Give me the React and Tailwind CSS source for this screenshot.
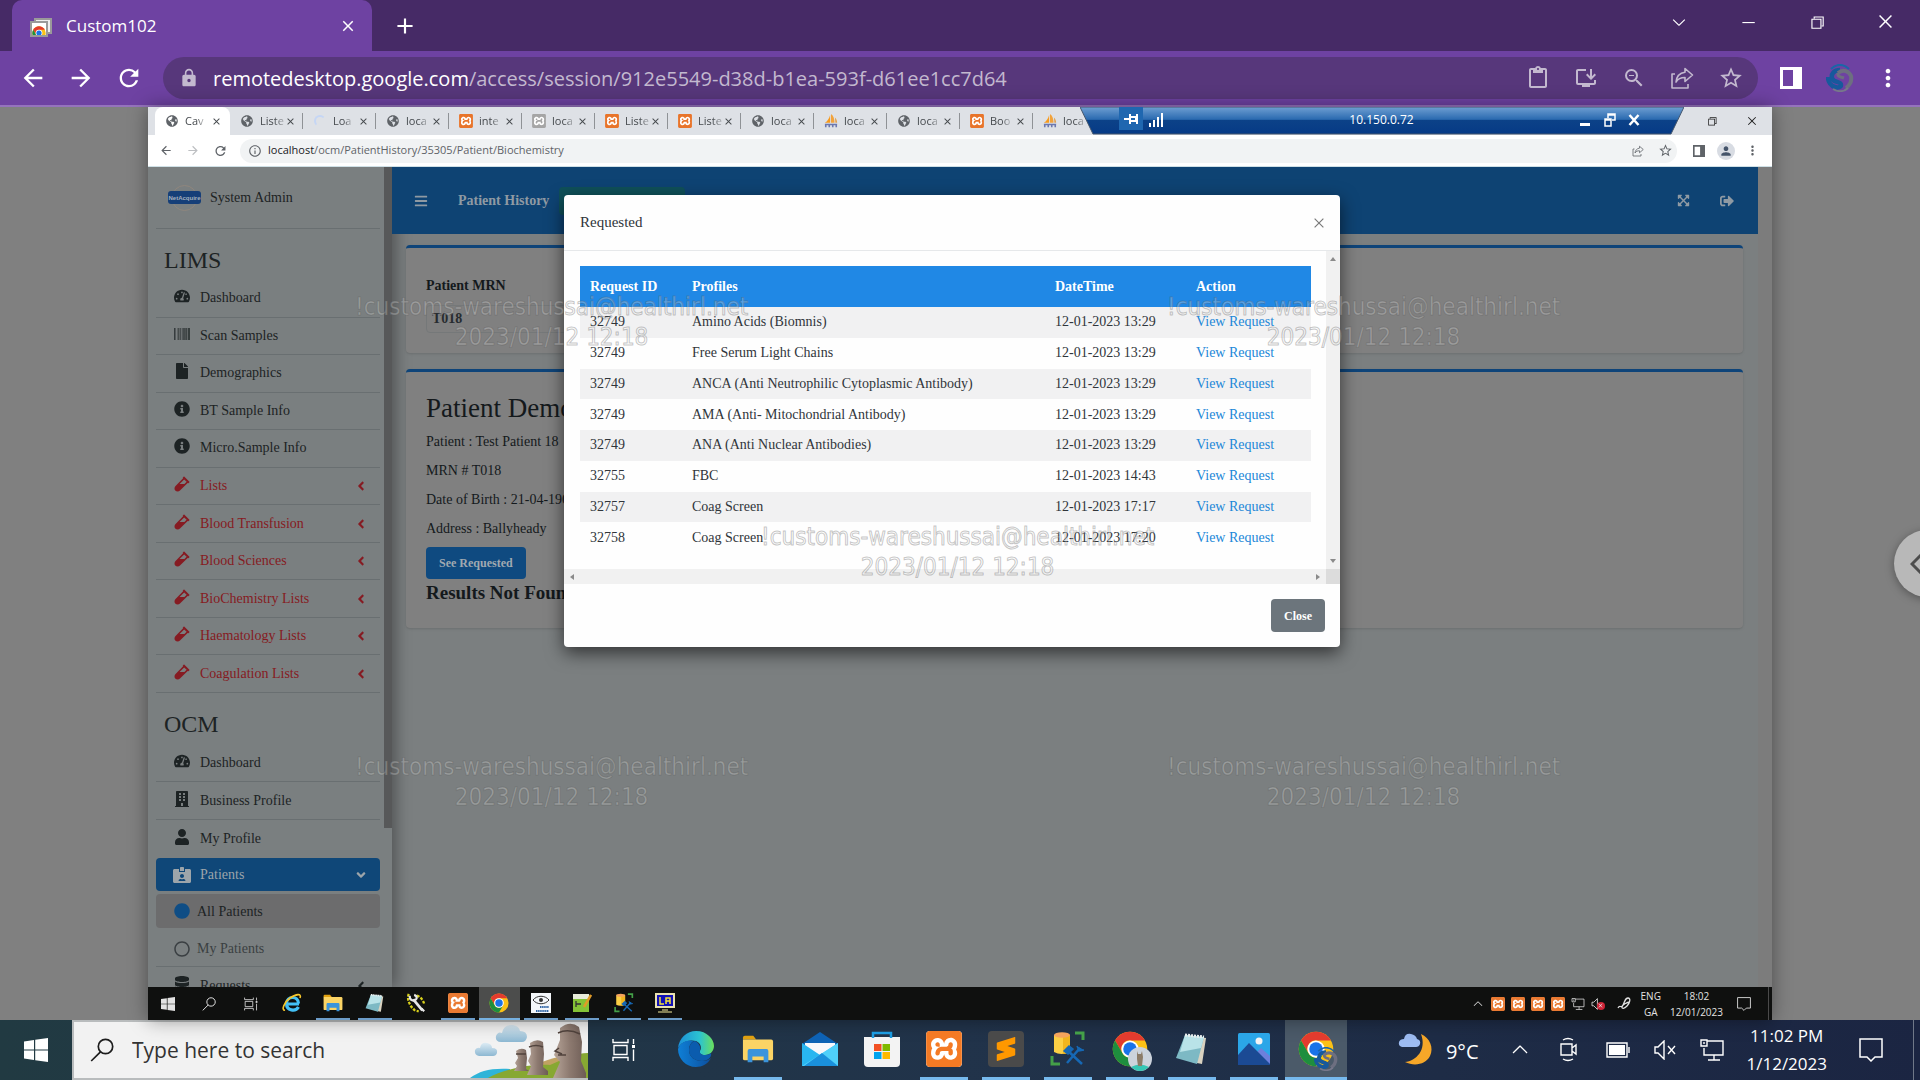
import React from "react";
import {
  FaTachometerAlt, FaBarcode, FaFile, FaInfoCircle, FaVial, FaAngleLeft, FaAngleDown, FaBuilding, FaUser,
  FaIdCardAlt, FaDatabase, FaExpandArrowsAlt, FaSignOutAlt, FaBars, FaGlobeAmericas, FaCircle, FaRegCircle,
} from "react-icons/fa";
import { SiXampp, SiSublimetext } from "react-icons/si";
import {
  MdContentPaste, MdZoomOut, MdStarBorder, MdArrowBack, MdArrowForward, MdRefresh, MdLock, MdAdd, MdClose,
  MdInfoOutline, MdMoreVert, MdPerson, MdOutlineInstallDesktop,
} from "react-icons/md";
import { VscChromeMinimize, VscChromeRestore, VscChromeClose, VscChevronDown, VscChevronUp } from "react-icons/vsc";

const ui = "font-['Open_Sans','Noto_Sans',sans-serif]";

/* ---------- drawings ---------- */
function ChromeLogo({ className }) {
  return (
    <svg viewBox="0 0 48 48" className={className} aria-hidden="true">
      <circle cx="24" cy="24" r="23" fill="#fbc116" />
      <path d="M4.1 12.5A23 23 0 0 1 43.9 12.5H24A11.5 11.5 0 0 0 14 29.8Z" fill="#e33b2e" />
      <path d="M4.1 12.5A23 23 0 0 0 24 47L34 29.8A11.5 11.5 0 0 1 14 29.8Z" fill="#1e8e3e" />
      <circle cx="24" cy="24" r="11.5" fill="#fff" />
      <circle cx="24" cy="24" r="9" fill="#1a73e8" />
    </svg>
  );
}
function WindowsLogo({ className }) {
  return (
    <svg viewBox="0 0 24 24" className={className} fill="currentColor" aria-hidden="true">
      <path d="M0 3.4 10 2v9.4H0zM11.2 1.8 24 0v11.4H11.2zM0 12.6h10V22L0 20.6zM11.2 12.6H24V24l-12.8-1.8z" />
    </svg>
  );
}
function SearchGlass({ className }) {
  return (
    <svg viewBox="0 0 24 24" className={className} fill="none" stroke="currentColor" strokeWidth="1.7" aria-hidden="true">
      <circle cx="15.5" cy="8.5" r="7.2" />
      <path d="M10.5 13.8 1.2 23" />
    </svg>
  );
}
function TaskView({ className }) {
  return (
    <svg viewBox="0 0 24 24" className={className} fill="none" stroke="currentColor" strokeWidth="1.4" aria-hidden="true">
      <path d="M1 1v3.5h15V1M1 23v-3.5h15V23M2 7.5h13v9H2zM21.500 1v5M21.500 11.500V23" />
      <path d="M20 7h3v3h-3z" fill="currentColor" stroke="none" />
    </svg>
  );
}
function ShareArrow({ className }) {
  return (
    <svg viewBox="0 0 24 24" className={className} fill="none" stroke="currentColor" strokeWidth="1.6" strokeLinejoin="round" aria-hidden="true">
      <path d="M5 8H2v14h16v-4" />
      <path d="M15 2.500 22.500 9 15 15.500v-4c-4 0-7 1-9 4.500.5-5 3.500-9 9-9.700z" />
    </svg>
  );
}
function SidePanel({ className }) {
  return (
    <svg viewBox="0 0 22 22" className={className} aria-hidden="true">
      <path d="M0 0h22v22H0zM3 3v16h10V3z" fill="currentColor" fillRule="evenodd" />
    </svg>
  );
}
function Swirl({ className }) {
  return (
    <svg viewBox="0 0 28 28" className={className} fill="none" aria-hidden="true">
      <path d="M14 6C8 6 5 10 6 14c1 5 9 3 9 7 0 2-3 3-6 2-4-1-7-5-7-10" stroke="#17599c" strokeWidth="4.500" />
      <path d="M12 9c5-4 11-2 13 3 1 5-1 9-5 12" stroke="#6d6f80" strokeWidth="4" />
      <path d="M12 9c-1 4 3 4 6 5" stroke="#6d6f80" strokeWidth="3" />
      <path d="M5 5C10-.5 18-.5 23 5" stroke="#1b66a8" strokeWidth="2" />
      <path d="M7 25c5 3 11 3 15-1" stroke="#77788a" strokeWidth="2" />
    </svg>
  );
}
function Xampp({ className }) {
  return (
    <span className="inline-flex rounded-sm bg-white">
      <SiXampp className={className} aria-hidden="true" />
    </span>
  );
}
function Pma({ className }) {
  return (
    <svg viewBox="0 0 16 16" className={className} aria-hidden="true">
      <path d="M7 1v9H1c3-2 5-5 6-9z" fill="#f79a1c" />
      <path d="M8 0c3 2 4 6 4 10H8z" fill="#f2a33c" />
      <path d="M12.500 4c2 2 2.500 4 2.500 6h-2z" fill="#e0a050" />
      <path d="M1 12h14M2 15V12M6 15v-3M10 15v-3M14 15v-3" stroke="#6c78af" strokeWidth="1.800" />
    </svg>
  );
}
function Folder({ className }) {
  return (
    <svg viewBox="0 0 34 28" className={className} aria-hidden="true">
      <path d="M1 2q0-2 2-2h9l3 4h-14z" fill="#e0a010" />
      <path d="M1 4h30q2 0 2 2v18q0 2-2 2H3q-2 0-2-2z" fill="#fbd465" />
      <path d="M6 16q0-2 2-2h18q2 0 2 2v12h-5v-6H11v6H6z" fill="#3b94dc" />
    </svg>
  );
}
function Notepad({ className }) {
  return (
    <svg viewBox="0 0 34 34" className={className} aria-hidden="true">
      <path d="M11 3 31 6l-4 26-10-2z" fill="#d9d2c0" />
      <path d="M10 3 29 5l-7 27L1 26z" fill="#7db9c4" />
      <path d="M10 3 29 5l-3 11L5 20z" fill="#b9e3e8" />
      <path d="M10 3l19 2" stroke="#e9eeee" strokeWidth="3" strokeDasharray="2 1" />
    </svg>
  );
}
function DbTools({ className }) {
  return (
    <svg viewBox="0 0 36 36" className={className} aria-hidden="true">
      <path d="M4 4v17q7 4 16 0V4z" fill="#fbcf45" />
      <path d="M13 3v20q4 0 7-2V4z" fill="#f0b51e" />
      <ellipse cx="12" cy="4" rx="8" ry="2.800" fill="#f5a45c" />
      <path d="M25 2h8v7M2 25v8h8" fill="none" stroke="#44a048" strokeWidth="3" />
      <path d="M17 19 32 33M30 17 17 32" stroke="#1668b4" strokeWidth="2.500" />
      <path d="m14 20 5-5 4 3-5 5zM27 15l2 5 5-1" fill="#1668b4" stroke="#1668b4" strokeWidth="1.500" />
    </svg>
  );
}
function Edge({ className }) {
  return (
    <svg viewBox="0 0 36 36" className={className} aria-hidden="true">
      <defs>
        <linearGradient id="edgeTop" x1="0" x2="1"><stop stopColor="#1b8fd8" /><stop offset=".6" stopColor="#2cc3d0" /><stop offset="1" stopColor="#6bdf5c" /></linearGradient>
        <linearGradient id="edgeLow" x1="0" x2="1"><stop stopColor="#0f7fd6" /><stop offset="1" stopColor="#0c4f9e" /></linearGradient>
      </defs>
      <path d="M0 17C1 7 9 0 18 0c11 0 18 8 18 15 0 5-4 9-9 9-4 0-6-2-5-4 2-3 1-8-4-10C11 8 3 11 0 17z" fill="url(#edgeTop)" />
      <path d="M0 18c2-7 10-10 16-8-4 2-5 6-5 9 0 7 6 11 13 11 4 0 7-1 9-3-3 6-9 9-15 9C8 36 0 28 0 18z" fill="url(#edgeLow)" />
      <path d="M11 19c0-4 2-8 6-9 4 2 6 6 5 9-1 4 2 5 5 5 3 0 5-1 6-2 1 4-3 8-9 8-7 0-13-4-13-11z" fill="#0b5cae" />
    </svg>
  );
}
function MailIcon({ className }) {
  return (
    <svg viewBox="0 0 36 34" className={className} aria-hidden="true">
      <path d="M0 12 18 0l18 12v5H0z" fill="#0d62b5" />
      <path d="M3 11h30v8L18 28 3 19z" fill="#f7f7fb" />
      <path d="M0 11l18 12L36 11v23H0z" fill="#29b6f0" />
      <path d="M36 11 0 34h36z" fill="#4fd0fa" />
      <path d="m20 21 16 13H2z" fill="#1a90dc" />
    </svg>
  );
}
function StoreIcon({ className }) {
  return (
    <svg viewBox="0 0 36 36" className={className} aria-hidden="true">
      <path d="M0 6h36v26q0 4-4 4H4q-4 0-4-4z" fill="#f3f3f3" />
      <path d="M9 7V2h18v5" fill="none" stroke="#1c9be0" strokeWidth="2.500" />
      <path d="M10 13h7.500v7H10z" fill="#f25022" /><path d="M18.500 13H26v7h-7.500z" fill="#7fba00" />
      <path d="M10 21h7.500v7H10z" fill="#00a4ef" /><path d="M18.500 21H26v7h-7.500z" fill="#ffb900" />
    </svg>
  );
}
function PhotosIcon({ className }) {
  return (
    <svg viewBox="0 0 32 32" className={className} aria-hidden="true">
      <rect width="32" height="32" rx="1.500" fill="#2ba6e8" />
      <circle cx="21" cy="8" r="3.500" fill="#f4f4f4" />
      <path d="m16 22 7-7 9 8v9H16z" fill="#6d80dc" />
      <path d="M0 22 11 10l21 21v1H0z" fill="#1b4a94" />
    </svg>
  );
}
function IeIcon({ className }) {
  return (
    <svg viewBox="0 0 20 20" className={className} fill="none" aria-hidden="true">
      <path d="M17 11H4.500M16.500 14c-3 5-12 4-12-3.500C4.500 3 16.500 2 16.500 10.500" stroke="#43c0f5" strokeWidth="3.200" />
      <path d="M3 17C-1 18 2 9 8 5S20 0 18 5" stroke="#f6c62c" strokeWidth="1.600" />
    </svg>
  );
}
function WrenchIcon({ className }) {
  return (
    <svg viewBox="0 0 22 22" className={className} fill="none" aria-hidden="true">
      <path d="M3 1c-2 5 0 12 6 17M12 3c4 1 7 5 8 9M5 14c3 5 6 6 9 6" stroke="#d8d01c" strokeWidth="2.500" strokeDasharray="3 1.500" />
      <path d="m8 7 10 12" stroke="#e8e8e8" strokeWidth="3" />
      <path d="M4 3c0 4 2 6 6 5 3-2 2-5-1-6M17 17l3 3" stroke="#e8e8e8" strokeWidth="2.500" />
    </svg>
  );
}
function EyeIcon({ className }) {
  return (
    <svg viewBox="0 0 20 20" className={className} aria-hidden="true">
      <rect width="20" height="20" fill="#f4f7fa" />
      <path d="M2 7c4-5 12-5 16 0-4 5-12 5-16 0z" fill="none" stroke="#333" strokeWidth="1" />
      <circle cx="10" cy="7" r="2" fill="#333" />
      <path d="M9 14h9M5 18h13" stroke="#3468a8" strokeWidth="2" strokeDasharray="1.500 .6" />
    </svg>
  );
}
function NotepadPP({ className }) {
  return (
    <svg viewBox="0 0 20 20" className={className} aria-hidden="true">
      <path d="M1 1h16v18H1z" fill="#e8ecda" /><path d="M1 6h16v13H1z" fill="#84c336" />
      <path d="M4 8v6M4 11h5" stroke="#333" strokeWidth="1.300" /><path d="m19 2-7 12" stroke="#e09a28" strokeWidth="2.500" />
    </svg>
  );
}
function LaIcon({ className }) {
  return (
    <svg viewBox="0 0 20 20" className={className} fill="none" aria-hidden="true">
      <path d="M0 0h20v15H0z" fill="#e9e2ae" /><path d="M2 2h16v11H2z" fill="#1010b8" />
      <path d="M5 4v7h4M11 11V5h4v6M11 8h4" stroke="#f2e23a" strokeWidth="1.500" />
      <path d="M7 17h6M3 19h14" stroke="#a9a26e" strokeWidth="1.500" />
    </svg>
  );
}
function NetIcon({ className }) {
  return (
    <svg viewBox="0 0 24 22" className={className} fill="none" stroke="currentColor" strokeWidth="1.400" aria-hidden="true">
      <path d="M7 2h16v14H4V9M14 16v5M8 21h12M1 1h6v6H1zM4 3v2" />
    </svg>
  );
}
function SpeakerIcon({ className, muted }) {
  return (
    <svg viewBox="0 0 22 20" className={className} fill="none" stroke="currentColor" strokeWidth="1.400" aria-hidden="true">
      <path d="M1 7h3l6-6v18l-6-6H1z" />
      {muted && <path d="m14 6 7 8M21 6l-7 8" />}
    </svg>
  );
}
function NoticeIcon({ className }) {
  return (
    <svg viewBox="0 0 24 24" className={className} fill="none" stroke="currentColor" strokeWidth="1.500" aria-hidden="true">
      <path d="M1 1h22v18h-7l-4 4-4-4H1z" />
    </svg>
  );
}
function MoaiScene({ className }) {
  return (
    <svg viewBox="0 0 118 56" className={className} aria-hidden="true">
      <defs><linearGradient id="stone" x1="0" x2="1"><stop stopColor="#b8a69a" /><stop offset=".5" stopColor="#8d7a70" /><stop offset="1" stopColor="#6d5c55" /></linearGradient>
        <linearGradient id="cloudy" x1="0" x2="0" y1="0" y2="1"><stop stopColor="#dcebf4" /><stop offset="1" stopColor="#8db8d2" /></linearGradient></defs>
      <path d="M0 56c10-7 20-10 40-9v9z" fill="#2fb4d8" />
      <path d="M72 40c15-6 30-8 46-8v24H68z" fill="#c0a262" />
      <path d="M18 56c15-9 42-14 62-13 14-6 26-12 38-12v25z" fill="#87a832" />
      <path d="M31 20q-6 0-5-6 2-5 6-3 2-9 11-8 6 1 7 6 7 0 7 6-1 5-5 5z" fill="url(#cloudy)" />
      <path d="M9 34q-5-1-4-6 2-3 5-2 1-6 7-5 5 1 5 5 6 0 5 5-1 3-4 3z" fill="url(#cloudy)" />
      <g fill="url(#stone)">
        <path d="M46 29q5-4 10-1l1 8-1 11 3 2H44l3-5-2-3 3-5z" />
        <path d="M60 21q7-5 13-1l1 12-1 13 5 4v4H57l4-9-3-5 3-7z" />
        <path d="M90 6q10-8 19-1l3 15-1 19 5 12v5H83l7-16-6-7 6-15z" />
      </g>
      <path d="M88 11q10-5 22 1M59 25q7-3 14 0M46 32h10M89 26l-4 3 7 3M88 33h8" stroke="#51433d" strokeWidth="1.500" fill="none" />
    </svg>
  );
}

/* ---------- outer browser ---------- */
function OuterBrowser() {
  return (
    <header className={`${ui} text-white`}>
      <div className="flex h-[51px] items-stretch bg-[#462a66] pl-3">
        <div className="flex w-[360px] items-center rounded-t-[10px] bg-[#6e42a2] pl-[18px] pr-[15px]">
          <span className="relative mr-3 h-6 w-6">
            <span className="absolute left-1 top-1 h-4 w-[18px] border-2 border-[#9a9a9a] bg-[#eee]" />
            <span className="absolute left-0 top-[7px] flex h-4 w-[18px] items-end justify-center overflow-hidden border-2 border-[#9a9a9a] bg-white">
              <ChromeLogo className="-mb-1.5 h-4 w-3.5 shrink-0" />
            </span>
          </span>
          <span className="text-[17px]">Custom102</span>
          <button aria-label="Close tab" className="ml-auto"><MdClose size={18} /></button>
        </div>
        <button aria-label="New tab" className="ml-5"><MdAdd size={26} /></button>
        <div className="ml-auto flex items-center pb-2">
          <button aria-label="Search tabs" className="flex w-[68px] justify-center"><VscChevronDown size={20} /></button>
          <button aria-label="Minimize" className="flex w-[69px] justify-center"><VscChromeMinimize size={18} /></button>
          <button aria-label="Restore" className="flex w-[69px] justify-center"><VscChromeRestore size={18} /></button>
          <button aria-label="Close" className="flex w-[69px] justify-center"><VscChromeClose size={19} /></button>
        </div>
      </div>
      <div className="flex h-14 items-center border-b-2 border-[#9573bd] bg-[#6e42a2] pr-[18px]">
        <div className="flex w-[163px] items-center gap-5 pl-[19px]">
          <button aria-label="Back"><MdArrowBack size={28} /></button>
          <button aria-label="Forward"><MdArrowForward size={28} /></button>
          <button aria-label="Reload"><MdRefresh size={28} /></button>
        </div>
        <div className="flex h-[42px] flex-1 items-center rounded-full bg-[#57377b] pl-4 pr-3.5 text-[#c3b9cf]">
          <MdLock size={20} />
          <a href="#session" className="ml-3.5 mt-0.5 text-[20px]">
            <span className="text-white">remotedesktop.google.com</span>/access/session/912e5549-d38d-b1ea-593f-d61ee1cc7d64
          </a>
          <div className="ml-auto flex items-center gap-6">
            <button aria-label="Clipboard"><MdContentPaste size={24} /></button>
            <button aria-label="Install"><MdOutlineInstallDesktop size={24} /></button>
            <button aria-label="Zoom"><MdZoomOut size={24} /></button>
            <button aria-label="Share"><ShareArrow className="h-6 w-6" /></button>
            <button aria-label="Bookmark"><MdStarBorder size={26} /></button>
          </div>
        </div>
        <button aria-label="Side panel" className="ml-[22px]"><SidePanel className="h-[22px] w-[22px]" /></button>
        <button aria-label="Profile" className="ml-6"><Swirl className="h-7 w-7" /></button>
        <button aria-label="Menu" className="ml-5"><MdMoreVert size={28} /></button>
      </div>
    </header>
  );
}

/* ---------- remote browser ---------- */
const tabs = [
  ["globe", "Cav"], ["globe", "Liste"], ["spin", "Loa"], ["globe", "loca"], ["xampp", "inte"],
  ["grey", "loca"], ["xampp", "Liste"], ["xampp", "Liste"], ["globe", "loca"], ["pma", "loca"],
  ["globe", "loca"], ["xampp", "Boo"], ["pma", "loca"],
];
function TabIcon({ kind }) {
  if (kind === "globe") return <FaGlobeAmericas className="text-[#5f6368]" size={12} />;
  if (kind === "xampp") return <Xampp className="h-3.5 w-3.5 text-[#e8742a]" />;
  if (kind === "grey") return <Xampp className="h-3.5 w-3.5 text-[#a5a5a5]" />;
  if (kind === "pma") return <Pma className="h-3.5 w-3.5" />;
  return <span className="h-3 w-3 rounded-full border-2 border-transparent border-t-[#c5d6f5] border-l-[#c5d6f5]" />;
}
function RemoteBrowser() {
  return (
    <div className={`relative ${ui} text-[#45494d]`}>
      <div className="flex h-7 items-center bg-[#dee1e6] pl-[7px]">
        {tabs.map(([kind, label], i) => (
          <div
            key={i}
            className={
              i === 0
                ? "flex h-7 w-[75px] shrink-0 items-center rounded-t-lg bg-white pl-2.5 pr-2"
                : "flex h-4 w-[73px] shrink-0 items-center border-r border-[#8f9296] pl-2.5 pr-1.5"
            }
          >
            <span className="flex w-3.5 shrink-0 justify-center"><TabIcon kind={kind} /></span>
            <span className="ml-1.5 whitespace-nowrap text-[11px] leading-4 [mask-image:linear-gradient(90deg,#000_60%,rgba(0,0,0,0.3))]">{label}</span>
            <button aria-label="Close tab" className="ml-auto"><MdClose size={11} /></button>
          </div>
        ))}
        <div className="ml-auto flex w-[66px] items-center justify-between pr-[14px] text-[#222]">
          <VscChromeRestore size={12} /><VscChromeClose size={12} />
        </div>
      </div>
      <div className="flex h-8 items-center border-b border-[#cfe0e6] bg-white pr-3 text-[#5f6368]">
        <div className="flex w-[80px] items-center gap-[13px] pl-[11px]">
          <MdArrowBack size={15} /><MdArrowForward size={15} className="text-[#bdbfc2]" /><MdRefresh size={16} />
        </div>
        <div className="ml-3 flex h-6 flex-1 items-center rounded-full bg-[#f1f3f4] pl-2 pr-1">
          <MdInfoOutline size={14} />
          <span className="ml-1.5 text-[11px]"><span className="text-[#202124]">localhost</span>/ocm/PatientHistory/35305/Patient/Biochemistry</span>
          <div className="ml-auto flex items-center gap-3.5"><ShareArrow className="h-3 w-3" /><MdStarBorder size={15} /></div>
        </div>
        <SidePanel className="ml-4 h-3 w-3" />
        <span className="ml-3 flex h-[18px] w-[18px] items-center justify-center rounded-full bg-[#d8dce3] text-[#44546a]"><MdPerson size={14} /></span>
        <MdMoreVert className="ml-2.5" size={15} />
      </div>
      <div className="absolute right-[88px] top-0 h-7 w-[604px]">
        <svg viewBox="0 0 604 28" preserveAspectRatio="none" className="absolute inset-0 h-full w-full" aria-hidden="true">
          <defs>
            <linearGradient id="rdp" x1="0" x2="0" y1="0" y2="1">
              <stop stopColor="#6f9fd2" /><stop offset=".46" stopColor="#2a6ab0" /><stop offset=".48" stopColor="#0c4288" /><stop offset="1" stopColor="#063a86" />
            </linearGradient>
          </defs>
          <path d="M0 0h604l-13 27H13z" fill="url(#rdp)" stroke="#44566c" />
        </svg>
        <div className="relative flex h-[25px] items-center pl-[39px] pr-11 text-white">
          <span className="flex h-[23px] w-6 items-center justify-center self-start bg-[#1f67b0]">
            <svg viewBox="0 0 14 12" className="h-3 w-3.5" fill="none" stroke="#fff" strokeWidth="2" aria-hidden="true"><path d="M0 6h5M6 1v10M6 4h6v4H6M13 1v10" /></svg>
          </span>
          <svg viewBox="0 0 14 14" className="ml-1.5 h-3.5 w-3.5" fill="#fff" aria-hidden="true"><path d="M0 10h2v4H0zM4 7h2v7H4zM8 4h2v10H8zM12 0h2v14h-2z" /></svg>
          <span className="flex-1 pl-5 text-center text-xs">10.150.0.72</span>
          <span className="mr-3.5 mt-2.5 h-[3px] w-2.5 bg-white" />
          <svg viewBox="0 0 12 14" className="mr-3 h-3.5 w-3" fill="none" stroke="#fff" strokeWidth="1.500" aria-hidden="true"><path d="M4 5V1h7v6H8M1 6h6v7H1zM4 2h7M1 7h6" /></svg>
          <svg viewBox="0 0 12 12" className="h-3 w-3" fill="none" stroke="#fff" strokeWidth="2.500" aria-hidden="true"><path d="m1.500 1 9 10M10.500 1l-9 10" /></svg>
        </div>
      </div>
    </div>
  );
}

/* ---------- application ---------- */
const lims = [
  [FaTachometerAlt, "Dashboard"], [FaBarcode, "Scan Samples"], [FaFile, "Demographics"], [FaInfoCircle, "BT Sample Info"],
  [FaInfoCircle, "Micro.Sample Info"], [FaVial, "Lists", 1], [FaVial, "Blood Transfusion", 1], [FaVial, "Blood Sciences", 1],
  [FaVial, "BioChemistry Lists", 1], [FaVial, "Haematology Lists", 1], [FaVial, "Coagulation Lists", 1],
];
function NavItem({ icon: Icon, label, red, arrow, line = true }) {
  return (
    <li className={`flex ${line ? "border-b border-[#696f71]" : ""}`}>
      <a href="#nav" className={`flex w-full items-center pl-4 pr-3 ${red ? "text-[#861b22]" : "text-[#1d2324]"}`}>
        <span className="flex w-5 justify-center pb-1"><Icon size={16} /></span>
        <span className="ml-2 text-[14px] leading-4">{label}</span>
        {(red || arrow) && <FaAngleLeft className="ml-auto" size={14} />}
      </a>
    </li>
  );
}
function Sidebar() {
  return (
    <aside className="flex w-[244px] shrink-0 overflow-hidden bg-[#7a7f80] text-[#1d2324] shadow-[4px_0_14px_rgba(0,0,0,0.35)]">
      <div className="flex-1 pl-2 pr-1">
        <div className="flex h-[62px] items-center border-b border-[#696f71] pl-3">
          <span className="flex h-[26px] w-[33px] items-center justify-center">
            <svg viewBox="0 0 33 26" className="h-full w-full" aria-hidden="true">
              <circle cx="16.500" cy="13" r="12.500" fill="none" stroke="#8f867d" />
              <rect y="6" width="33" height="13" rx="3" fill="#163f78" />
              <text x="16.500" y="15" fontSize="6" fontWeight="700" textAnchor="middle" fill="#a5b0bd" fontFamily="Liberation Sans">NetAcquire</text>
            </svg>
          </span>
          <span className="ml-[9px] text-[14px]">System Admin</span>
        </div>
        <h2 className="flex h-[51px] items-end pb-0.5 pl-2 text-[24px]">LIMS</h2>
        <ul className="grid h-[413px] auto-rows-fr">
          {lims.map(([Icon, label, red]) => <NavItem key={label} icon={Icon} label={label} red={red} />)}
        </ul>
        <h2 className="flex h-[51px] items-end pb-0.5 pl-2 text-[24px]">OCM</h2>
        <ul className="grid auto-rows-[38px]">
          <NavItem icon={FaTachometerAlt} label="Dashboard" />
          <NavItem icon={FaBuilding} label="Business Profile" />
          <NavItem icon={FaUser} label="My Profile" line={false} />
        </ul>
        <a href="#patients" className="flex h-[33px] items-center rounded bg-[#0f4778] pl-4 pr-3 text-[#9da5aa]">
          <span className="flex w-5 justify-center"><FaIdCardAlt size={18} /></span>
          <span className="ml-2 text-[14px]">Patients</span>
          <FaAngleDown className="ml-auto" size={14} />
        </a>
        <a href="#all" className="mt-[3px] flex h-[34px] items-center rounded bg-[#6c6c6d] pl-4 text-[14px]">
          <span className="flex w-5 justify-center text-[#0f4d85]"><FaCircle size={16} /></span><span className="ml-[5px]">All Patients</span>
        </a>
        <a href="#mine" className="mt-[3px] flex h-9 items-center border-b border-[#696f71] pl-4 text-[14px] text-[#3a3f42]">
          <span className="flex w-5 justify-center"><FaRegCircle size={16} /></span><span className="ml-[5px]">My Patients</span>
        </a>
        <ul className="grid auto-rows-[38px]"><NavItem icon={FaDatabase} label="Requests" arrow /></ul>
      </div>
      <div className="h-[661px] w-2 bg-[#575859]" />
    </aside>
  );
}
const rows = [
  ["32749", "Amino Acids (Biomnis)", "12-01-2023 13:29"],
  ["32749", "Free Serum Light Chains", "12-01-2023 13:29"],
  ["32749", "ANCA (Anti Neutrophilic Cytoplasmic Antibody)", "12-01-2023 13:29"],
  ["32749", "AMA (Anti- Mitochondrial Antibody)", "12-01-2023 13:29"],
  ["32749", "ANA (Anti Nuclear Antibodies)", "12-01-2023 13:29"],
  ["32755", "FBC", "12-01-2023 14:43"],
  ["32757", "Coag Screen", "12-01-2023 17:17"],
  ["32758", "Coag Screen", "12-01-2023 17:20"],
];
function RequestedModal() {
  return (
    <div role="dialog" aria-label="Requested" className="w-[776px] rounded bg-[#fefefe] text-[#30353a] shadow-[0_6px_18px_rgba(0,0,0,0.6)]">
      <div className="flex h-14 items-center justify-between border-b border-[#e6e8ea] pl-4 pr-3.5">
        <h3 className="text-[15px]">Requested</h3>
        <button aria-label="Close dialog" className="text-[#777]"><VscChromeClose size={14} /></button>
      </div>
      <div className="flex">
        <div className="flex-1 pb-4 pl-4 pr-[15px] pt-[15px]">
          <table className="h-[287px] w-full table-fixed text-left text-[14px] leading-4">
            <colgroup><col className="w-[102px]" /><col /><col className="w-[141px]" /><col className="w-[125px]" /></colgroup>
            <thead className="bg-[#2088e5] text-white">
              <tr className="h-[41px]">{["Request ID", "Profiles", "DateTime", "Action"].map((h) => <th key={h} className="px-2.5">{h}</th>)}</tr>
            </thead>
            <tbody>
              {rows.map(([id, name, when], i) => (
                <tr key={i} className="odd:bg-[#f1f1f2]">
                  <td className="px-2.5">{id}</td><td className="px-2.5">{name}</td><td className="px-2.5">{when}</td>
                  <td className="px-2.5"><a href="#view" className="text-[#2187d8]">View Request</a></td>
                </tr>
              ))}
            </tbody>
          </table>
        </div>
        <div className="flex w-3.5 flex-col items-center justify-between bg-[#f1f1f1] py-1.5">
          <span className="h-0 w-0 border-x-[3px] border-b-4 border-x-transparent border-b-[#8a8a8a]" />
          <span className="h-0 w-0 border-x-[3px] border-t-4 border-x-transparent border-t-[#8a8a8a]" />
        </div>
      </div>
      <div className="flex h-[15px]">
        <div className="flex flex-1 items-center justify-between bg-[#f1f1f1] px-1.5">
          <span className="h-0 w-0 border-y-[3px] border-r-4 border-y-transparent border-r-[#8a8a8a]" />
          <span className="h-0 w-0 border-y-[3px] border-l-4 border-y-transparent border-l-[#8a8a8a]" />
        </div>
        <div className="w-3.5 bg-[#dcdcdc]" />
      </div>
      <div className="flex h-[63px] items-center justify-end pr-[15px]">
        <button className="h-[33px] w-[54px] rounded bg-[#6c757c] text-xs font-bold text-white">Close</button>
      </div>
    </div>
  );
}
function Application() {
  return (
    <div className="relative flex min-h-0 flex-1 overflow-hidden bg-[#7b7f80] font-['Liberation_Serif',serif] text-[#14191c]">
      <Sidebar />
      <main className="flex-1">
        <nav className="flex h-[67px] items-center bg-[#0e4373] pl-[22px] pr-6 text-[#8f9aa3]">
          <button aria-label="Toggle menu"><FaBars size={14} /></button>
          <span className="ml-[30px] text-[14px] font-bold">Patient History</span>
          <span className="ml-2.5 mt-5 h-7 w-[126px] self-start rounded bg-[#0f5059]" />
          <button aria-label="Fullscreen" className="ml-auto"><FaExpandArrowsAlt size={13} /></button>
          <button aria-label="Sign out" className="ml-[30px]"><FaSignOutAlt size={14} /></button>
        </nav>
        <div className="flex flex-col gap-4 pl-3.5 pr-[15px] pt-[11px]">
          <section className="h-[108px] rounded border-t-[3px] border-[#0e4479] bg-[#808080] px-5 pt-7 shadow">
            <label htmlFor="mrn" className="block text-[14px] font-bold leading-5">Patient MRN</label>
            <input id="mrn" defaultValue="T018" className="mt-[9px] h-7 w-1/2 rounded border border-[#757879] bg-transparent px-[5px] text-[14px] font-bold text-[#272c30]" />
          </section>
          <section className="h-[259px] rounded border-t-[3px] border-[#0e4479] bg-[#808080] px-5 pt-5 shadow">
            <h1 className="text-[27px] leading-8">Patient Demographics</h1>
            <div className="mt-[3px] text-[14px] leading-[29px]">
              <p>Patient : Test Patient 18</p><p>MRN # T018</p><p>Date of Birth : 21-04-1965</p><p>Address : Ballyheady</p>
            </div>
            <button className="mt-1 block h-8 rounded bg-[#0f4a80] px-[13px] text-[12px] font-bold text-[#a0a9b0]">See Requested</button>
            <h4 className="text-[19px] font-bold leading-7">Results Not Found</h4>
          </section>
        </div>
      </main>
      <div className="w-3.5 bg-[#7c7c7c]" />
      <div className="absolute inset-x-0 top-7 flex justify-center pr-4"><RequestedModal /></div>
    </div>
  );
}
function Watermark({ className }) {
  return (
    <div className={`pointer-events-none absolute whitespace-nowrap text-center font-['DejaVu_Sans_Condensed','Noto_Sans',sans-serif] text-[24px] leading-[30px] text-white/25 [-webkit-text-stroke:1px_rgba(90,90,90,0.35)] ${className}`}>
      !customs-wareshussai@healthirl.net<br />2023/01/12 12:18
    </div>
  );
}

/* ---------- task bars ---------- */
const remoteApps = [
  [IeIcon, 0], [Folder, 1], [Notepad, 1], [WrenchIcon, 0], ["x", 1], [ChromeLogo, 2], [EyeIcon, 1], [NotepadPP, 1], [DbTools, 1], [LaIcon, 1],
];
function RemoteTaskbar() {
  return (
    <div className={`flex h-[33px] shrink-0 items-center bg-[#0f100f] text-[#e2e2e2] ${ui}`}>
      <button aria-label="Start" className="flex w-10 justify-center"><WindowsLogo className="h-3.5 w-3.5" /></button>
      <button aria-label="Search" className="flex w-[42px] justify-center"><SearchGlass className="h-3.5 w-3.5" /></button>
      <button aria-label="Task view" className="flex w-[41px] justify-center"><TaskView className="h-3.5 w-3.5" /></button>
      <div className="grid h-full w-[415px] grid-cols-10">
        {remoteApps.map(([Icon, state], i) => (
          <button key={i} aria-label={`App ${i + 1}`} className={`flex h-full flex-col items-center justify-between pt-1.5 ${state === 2 ? "bg-[#4c4d4c]" : ""}`}>
            {Icon === "x" ? <Xampp className="h-5 w-5 text-[#ea7a32]" /> : <Icon className="h-5 w-5" />}
            <span className={`h-0.5 ${state === 2 ? "w-full bg-[#76b0e0]" : state ? "w-[34px] bg-[#6c9cc8]" : ""}`} />
          </button>
        ))}
      </div>
      <div className="ml-auto flex h-full items-center gap-1.5 text-[10px] leading-4">
        <VscChevronUp size={14} />
        {[0, 1, 2, 3].map((n) => <Xampp key={n} className="h-3.5 w-3.5 text-[#ea7a32]" />)}
        <NetIcon className="h-3 w-3.5" />
        <span className="flex items-end"><SpeakerIcon className="h-3 w-3.5" /><span className="-ml-2 flex h-2 w-2 items-center justify-center rounded-full bg-[#cf2437]"><MdClose size={7} /></span></span>
        <svg viewBox="0 0 14 14" className="ml-1.5 mr-1 h-3.5 w-3.5" fill="none" stroke="currentColor" strokeWidth="1.300" aria-hidden="true"><path d="M1 11c2-4 3 1 5-3s2-7 5-7 2 5-1 8-5 3-5 1 5-5 8-5" /></svg>
        <span className="mr-[3px] text-center">ENG<br />GA</span>
        <span className="mr-2 text-center">18:02<br />12/01/2023</span>
        <NoticeIcon className="mr-[11px] h-3.5 w-3.5" />
        <span className="mr-[3px] h-full w-px bg-[#4a4a4a]" />
      </div>
    </div>
  );
}
function AppButton({ label, open, active, children }) {
  return (
    <button aria-label={label} className={`flex h-full w-[62px] flex-col items-center ${active ? "bg-[#4b5a69]" : ""}`}>
      <span className="relative flex flex-1 items-center">{children}</span>
      <span className={`h-[3px] ${active ? "w-full" : "w-12"} ${open ? "bg-[#76b9ed]" : ""}`} />
    </button>
  );
}
function Taskbar() {
  return (
    <footer className={`flex h-[60px] shrink-0 items-center bg-linear-to-r from-[#213a42] via-[#21334a] to-[#1b2542] text-white ${ui}`}>
      <button aria-label="Start" className="flex w-[72px] justify-center"><WindowsLogo className="h-6 w-6" /></button>
      <label className="flex h-full w-[516px] items-center overflow-hidden border-2 border-r-0 border-[#b9bcbd] bg-[#f2f2f2] pl-4 text-[#1d1d1d]">
        <SearchGlass className="h-6 w-6 shrink-0" />
        <input placeholder="Type here to search" className="ml-[18px] mt-0.5 w-0 min-w-0 flex-1 bg-transparent text-[21px] placeholder:text-[#333]" />
        <MoaiScene className="h-14 w-[118px] shrink-0" />
      </label>
      <button aria-label="Task view" className="mr-[5px] flex w-[72px] justify-center"><TaskView className="h-6 w-6" /></button>
      <div className="flex h-full">
        <AppButton label="Edge"><Edge className="h-9 w-9" /></AppButton>
        <AppButton label="File Explorer" open><Folder className="h-7 w-8" /></AppButton>
        <AppButton label="Mail"><MailIcon className="h-[34px] w-9" /></AppButton>
        <AppButton label="Store"><StoreIcon className="h-9 w-9" /></AppButton>
        <AppButton label="XAMPP" open><Xampp className="h-9 w-9 text-[#f47a24]" /></AppButton>
        <AppButton label="Sublime Text" open><span className="flex h-9 w-9 items-center justify-center rounded-sm bg-[#4a4a4a]"><SiSublimetext size={24} className="text-[#ff9800]" /></span></AppButton>
        <AppButton label="Database Tools" open><DbTools className="h-9 w-9" /></AppButton>
        <AppButton label="Chrome" open>
          <ChromeLogo className="h-9 w-9" />
          <svg viewBox="0 0 24 24" className="absolute -right-1 bottom-1.5 h-6 w-6" aria-hidden="true"><circle cx="12" cy="12" r="12" fill="#ccd3dc" /><path d="M3 20q9-5 18 0-9 8-18 0z" fill="#36c6b4" /><path d="m9 4 1 3h3l1-3 1 6-1 9H10L9 12z" fill="#8c7c68" /></svg>
        </AppButton>
        <AppButton label="Notepad" open><Notepad className="h-[34px] w-[34px]" /></AppButton>
        <AppButton label="Photos" open><PhotosIcon className="h-8 w-8" /></AppButton>
        <AppButton label="Chrome remote" open active>
          <ChromeLogo className="h-9 w-9" />
          <Swirl className="absolute -right-1 bottom-1.5 h-6 w-6" />
        </AppButton>
      </div>
      <div className="ml-auto flex h-full items-center">
        <svg viewBox="0 0 36 36" className="h-9 w-9" aria-hidden="true">
          <path d="M23 2c9 4 13 14 9 22s-15 11-25 6c11-1 22-12 16-28z" fill="#f6a728" />
          <path d="M4 15q-4-1-3-5 1-3 5-3 1-6 7-5 5 1 6 5 4 1 3 5-1 3-4 3z" fill="#9dbcf2" />
        </svg>
        <span className="ml-3 mt-1 text-[20px]">9°C</span>
        <VscChevronUp className="ml-[30px]" size={24} />
        <svg viewBox="0 0 18 26" className="ml-7 h-[26px] w-[18px]" fill="none" stroke="#fff" strokeWidth="1.400" aria-hidden="true"><path d="M1 7h11v11H1zM12 11l4-3v9l-4-3M3 3q5-3 10 0M3 22q5 3 10 0" /></svg>
        <svg viewBox="0 0 24 16" className="ml-7 h-4 w-6" fill="none" stroke="#fff" strokeWidth="1.400" aria-hidden="true"><path d="M1 1h20v14H1zM23 5v6" /><path d="M3 3h16v10H3z" fill="#fff" stroke="none" /></svg>
        <SpeakerIcon muted className="ml-6 h-5 w-[22px]" />
        <NetIcon className="ml-6 h-[22px] w-6" />
        <span className="ml-[22px] text-center text-[17px] leading-7">11:02 PM<br />1/12/2023</span>
        <NoticeIcon className="ml-8 h-6 w-6" />
        <span className="ml-[30px] mr-1.5 h-full w-px bg-[#6f7888]" />
      </div>
    </footer>
  );
}

export default function App() {
  return (
    <div className="flex h-screen flex-col overflow-hidden bg-[#808080]">
      <OuterBrowser />
      <div className="relative flex min-h-0 flex-1 justify-center px-[148px]">
        <div className="relative flex min-w-0 flex-1 flex-col overflow-hidden shadow-[0_0_18px_rgba(0,0,0,0.4)]">
          <RemoteBrowser />
          <Application />
          <RemoteTaskbar />
          <Watermark className="left-[207px] top-[185px]" />
          <Watermark className="left-[1019px] top-[185px]" />
          <Watermark className="left-[613px] top-[415px]" />
          <Watermark className="left-[207px] top-[645px]" />
          <Watermark className="left-[1019px] top-[645px]" />
        </div>
        <button aria-label="Session options" className="absolute -right-[41px] top-[423px] flex h-[67px] w-[67px] items-center rounded-full bg-[#b8b8b8] pl-4 text-[#4d4d4d] shadow-[0_2px_10px_rgba(0,0,0,0.35)]">
          <svg viewBox="0 0 12 20" className="h-5 w-3" fill="none" stroke="currentColor" strokeWidth="3" aria-hidden="true"><path d="m11 1-9 9 9 9" /></svg>
        </button>
      </div>
      <Taskbar />
    </div>
  );
}
